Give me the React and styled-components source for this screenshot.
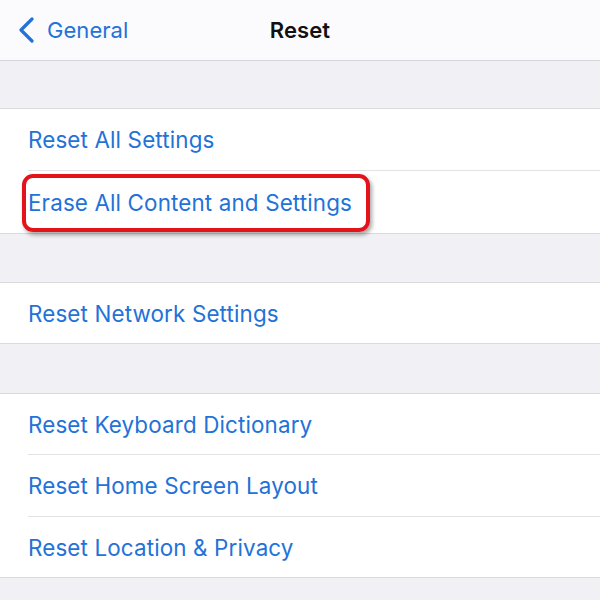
import React from "react";
import styled, { createGlobalStyle } from "styled-components";

const Global = createGlobalStyle`
  html, body { margin: 0; padding: 0; background: #f1f1f5; }
  body { font-family: Inter, "Noto Sans", "Liberation Sans", sans-serif; -webkit-font-smoothing: antialiased; }
`;

const Screen = styled.div`
  width: 600px;
  height: 600px;
  overflow: hidden;
  background: #f1f1f5;
  display: flex;
  flex-direction: column;
`;

const NavBar = styled.div`
  height: 60px;
  flex-shrink: 0;
  background: #fbfbfd;
  border-bottom: 1px solid #d6d6da;
  display: grid;
  grid-template-columns: 1fr auto 1fr;
  align-items: center;
  padding: 0 18px;
`;

const BackButton = styled.div`
  display: flex;
  align-items: center;
  gap: 12px;
  color: #2272d8;
  font-size: 22px;
  letter-spacing: 0.05px;
`;

const Title = styled.div`
  font-size: 22px;
  font-weight: 600;
  color: #111;
  letter-spacing: 0.1px;
`;

const Spacer = styled.div`
  height: ${(p) => p.$h}px;
  flex-shrink: 0;
`;

const Group = styled.div`
  background: #fff;
  border-top: 1px solid #dadade;
  border-bottom: 1px solid #dadade;
  flex-shrink: 0;
`;

const Row = styled.div`
  position: relative;
  padding-left: 28px;
`;

const RowLabel = styled.div`
  height: ${(p) => p.$h || 61}px;
  box-sizing: border-box;
  display: flex;
  align-items: center;
  color: #2272d8;
  font-size: 22.4px;
  letter-spacing: 0.14px;
  border-bottom: ${(p) => (p.$last ? "none" : "1px solid #e3e3e7")};
`;

const Highlight = styled.div`
  position: absolute;
  left: 22px;
  top: 3px;
  width: 348px;
  height: 58px;
  box-sizing: border-box;
  border: 4px solid #e3121b;
  border-radius: 11px;
  box-shadow: 2px 3px 4px rgba(0, 0, 0, 0.35);
  pointer-events: none;
`;

const Chevron = () => (
  <svg width="17" height="26" viewBox="0 0 17 26" fill="none">
    <path d="M14 2 L3 13 L14 24" stroke="#2272d8" strokeWidth="3.2" strokeLinecap="round" strokeLinejoin="round" />
  </svg>
);

const Item = ({ children, last, h, highlight }) => (
  <Row>
    <RowLabel $last={last} $h={h}>{children}</RowLabel>
    {highlight && <Highlight />}
  </Row>
);

export default function App() {
  return (
    <>
      <Global />
      <Screen>
        <NavBar>
          <BackButton>
            <Chevron />
            <span>General</span>
          </BackButton>
          <Title>Reset</Title>
          <div />
        </NavBar>
        <Spacer $h={47} />
        <Group>
          <Item h={62}>Reset All Settings</Item>
          <Item h={62} last highlight>Erase All Content and Settings</Item>
        </Group>
        <Spacer $h={48} />
        <Group>
          <Item h={60} last>Reset Network Settings</Item>
        </Group>
        <Spacer $h={49} />
        <Group>
          <Item h={61}>Reset Keyboard Dictionary</Item>
          <Item h={62}>Reset Home Screen Layout</Item>
          <Item h={60} last>Reset Location &amp; Privacy</Item>
        </Group>
      </Screen>
    </>
  );
}
